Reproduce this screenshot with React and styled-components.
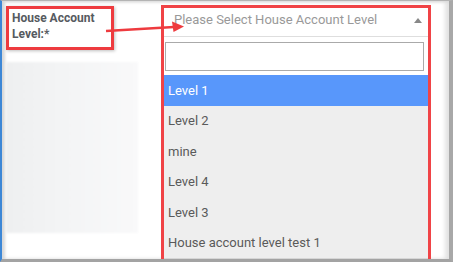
import styled, { createGlobalStyle } from "styled-components";

const GlobalStyle = createGlobalStyle`
  html, body {
    margin: 0;
    padding: 0;
    background: #ffffff;
  }
  body {
    font-family: Roboto, "Liberation Sans", Arial, sans-serif;
  }
`;

const options = ["Level 1", "Level 2", "mine", "Level 4", "Level 3", "House account level test 1"];

const Frame = styled.div`
  position: relative;
  width: 453px;
  height: 262px;
  box-sizing: border-box;
  border-top: 1px solid #b4b4b4;
  border-left: 2px solid #3d87d6;
  border-right: 4px solid #a8a8a8;
  border-bottom: 3px solid #a3a3a3;
  box-shadow: inset 3px 1px 3px #d8d8d8, inset -4px 0 4px #e2e2e2;
  background: #ffffff;
  overflow: hidden;
  display: flex;
  align-items: flex-start;
`;

const LeftCol = styled.div`
  width: 159px;
  padding: 5px 0 0 4px;
  box-sizing: border-box;
  display: flex;
  flex-direction: column;
  gap: 12px;
`;

const Label = styled.div`
  width: 108px;
  height: 44px;
  box-sizing: border-box;
  border: 3px solid #ee3b3f;
  box-shadow: 1px 1px 3px rgba(0, 0, 0, 0.25);
  padding: 1px 3px;
  font-size: 12px;
  line-height: 16px;
  font-weight: 700;
  color: #565a60;
`;

const Blurred = styled.div`
  width: 132px;
  height: 171px;
  background: linear-gradient(90deg, #eeeff0 0%, #f3f4f5 40%, #f9f9fa 100%);
  filter: blur(1px);
`;

const Dropdown = styled.div`
  margin-top: 4px;
  width: 270px;
  height: 260px;
  box-sizing: border-box;
  border: 3px solid #f04346;
  border-bottom: none;
  background: #ffffff;
  display: flex;
  flex-direction: column;
`;

const Header = styled.div`
  height: 29px;
  box-sizing: border-box;
  border-bottom: 1px solid #dedede;
  padding: 0 6px 0 10px;
  display: flex;
  align-items: flex-start;
  justify-content: space-between;
  font-size: 13px;
  line-height: 24px;
  color: #999999;
`;

const Caret = styled.span`
  margin-top: 10px;
  width: 0;
  height: 0;
  border-left: 4px solid transparent;
  border-right: 4px solid transparent;
  border-bottom: 5px solid #888888;
`;

const SearchWrap = styled.div`
  padding: 5px 4px 4px 1px;
`;

const Search = styled.input`
  display: block;
  width: 100%;
  height: 29px;
  box-sizing: border-box;
  border: 1px solid #aaaaaa;
  outline: none;
  background: #ffffff;
`;

const List = styled.ul`
  margin: 0;
  padding: 0;
  list-style: none;
  background: #eeeeee;
  flex: 1;
`;

const Option = styled.li`
  height: 30.5px;
  padding: 0 4px;
  display: flex;
  align-items: center;
  font-size: 13px;
  color: ${(p) => (p.$active ? "#ffffff" : "#5a5a5a")};
  background: ${(p) => (p.$active ? "#5897fb" : "transparent")};
  &:last-child {
    border-bottom: 1px solid #d6d6d6;
  }
`;

const Arrow = styled.svg`
  position: absolute;
  left: 102px;
  top: 18px;
  pointer-events: none;
`;

export default function App() {
  return (
    <>
      <GlobalStyle />
      <Frame>
        <LeftCol>
          <Label>
            House Account
            <br />
            Level:*
          </Label>
          <Blurred />
        </LeftCol>
        <Dropdown>
          <Header>
            <span>Please Select House Account Level</span>
            <Caret />
          </Header>
          <SearchWrap>
            <Search />
          </SearchWrap>
          <List>
            {options.map((o, i) => (
              <Option key={o} $active={i === 0}>
                {o}
              </Option>
            ))}
          </List>
        </Dropdown>
        <Arrow width="84" height="20" viewBox="0 0 84 20">
          <line x1="2" y1="12" x2="70" y2="8" stroke="#ee3b3f" strokeWidth="2.5" />
          <polygon points="80,7.5 68,2.5 69.5,13" fill="#ee3b3f" />
        </Arrow>
      </Frame>
    </>
  );
}
